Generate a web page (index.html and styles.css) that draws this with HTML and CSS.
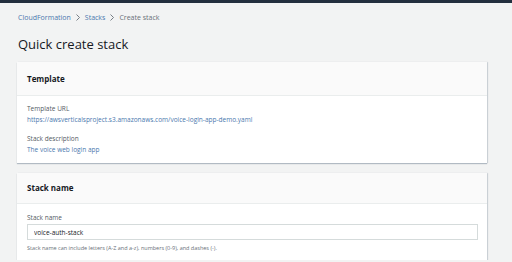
FILE: index.html
```html
<!DOCTYPE html>
<html lang="en">
<head>
    <meta charset="UTF-8">
    <meta name="viewport" content="width=device-width, initial-scale=1.0">
    <title>Quick create stack</title>
    <link rel="stylesheet" href="styles.css">
</head>
<body>
    <div class="top-bar"></div>
    <div class="page">
        <nav class="breadcrumb">
            <a href="#">CloudFormation</a>
            <svg class="sep" width="4" height="7" viewBox="0 0 4 7"><path d="M0.5 0.5 L3.5 3.5 L0.5 6.5" fill="none" stroke="#687078" stroke-width="0.9"/></svg>
            <a href="#">Stacks</a>
            <svg class="sep" width="4" height="7" viewBox="0 0 4 7"><path d="M0.5 0.5 L3.5 3.5 L0.5 6.5" fill="none" stroke="#687078" stroke-width="0.9"/></svg>
            <span class="current">Create stack</span>
        </nav>
        <h1 class="page-title">Quick create stack</h1>

        <div class="card">
            <div class="card-header">Template</div>
            <div class="card-body">
                <div class="field">
                    <div class="field-label">Template URL</div>
                    <div class="field-value">https://awsverticalsproject.s3.amazonaws.com/voice-login-app-demo.yaml</div>
                </div>
                <div class="field">
                    <div class="field-label">Stack description</div>
                    <div class="field-value">The voice web login app</div>
                </div>
            </div>
        </div>

        <div class="card">
            <div class="card-header card-header-small">Stack name</div>
            <div class="card-body card-body-form">
                <label class="field-label" for="stackName">Stack name</label>
                <input type="text" id="stackName" class="form-control" value="voice-auth-stack">
                <div class="hint">Stack name can include letters (A-Z and a-z), numbers (0-9), and dashes (-).</div>
            </div>
        </div>
    </div>
</body>
</html>
```

FILE: styles.css
```css
* {
    margin: 0;
    padding: 0;
    box-sizing: border-box;
}

body {
    background-color: #f2f3f3;
    font-family: "Open Sans", Arial, sans-serif;
    color: #16191f;
    overflow: hidden;
}

.top-bar {
    height: 3px;
    background-color: #232f3e;
}

.page {
    width: 470px;
    margin-left: 17px;
}

.breadcrumb {
    display: flex;
    align-items: center;
    gap: 5px;
    font-size: 7px;
    margin-top: 9px;
    height: 10px;
    padding-left: 1px;
}

.breadcrumb a {
    color: #4a78ae;
    text-decoration: none;
}

.breadcrumb .current {
    color: #687078;
}

.page-title {
    font-size: 13px;
    font-weight: normal;
    margin-top: 14px;
    padding-left: 1px;
    height: 17px;
    line-height: 17px;
}

.card {
    background: white;
    box-shadow: 0 1px 1px rgba(0, 31, 63, 0.25), 1px 0 1px rgba(0, 31, 63, 0.12);
    margin-top: 9px;
}

.card + .card {
    margin-top: 10px;
}

.card-header {
    background-color: #fafafa;
    border-bottom: 1px solid #eaeded;
    height: 34px;
    line-height: 33px;
    padding-left: 10px;
    font-size: 8px;
    font-weight: bold;
}

.card-header-small {
    height: 31px;
    line-height: 30px;
}

.card-body {
    padding: 7px 10px 8px 10px;
}

.card-body-form {
    padding-top: 8px;
    padding-bottom: 7px;
}

.field + .field {
    margin-top: 8px;
}

.field-label {
    display: block;
    font-size: 6.5px;
    color: #545b64;
    line-height: 11px;
}

.field-value {
    font-size: 6.5px;
    color: #4a78ae;
    line-height: 11px;
}

.form-control {
    display: block;
    width: 451px;
    height: 16px;
    margin-top: 1px;
    padding: 0 6px;
    border: 1px solid #d5dbdb;
    font-family: "Open Sans", Arial, sans-serif;
    font-size: 6.5px;
    color: #16191f;
    outline: none;
}

.hint {
    font-size: 5.5px;
    color: #687078;
    line-height: 10px;
    margin-top: 3px;
}
```
